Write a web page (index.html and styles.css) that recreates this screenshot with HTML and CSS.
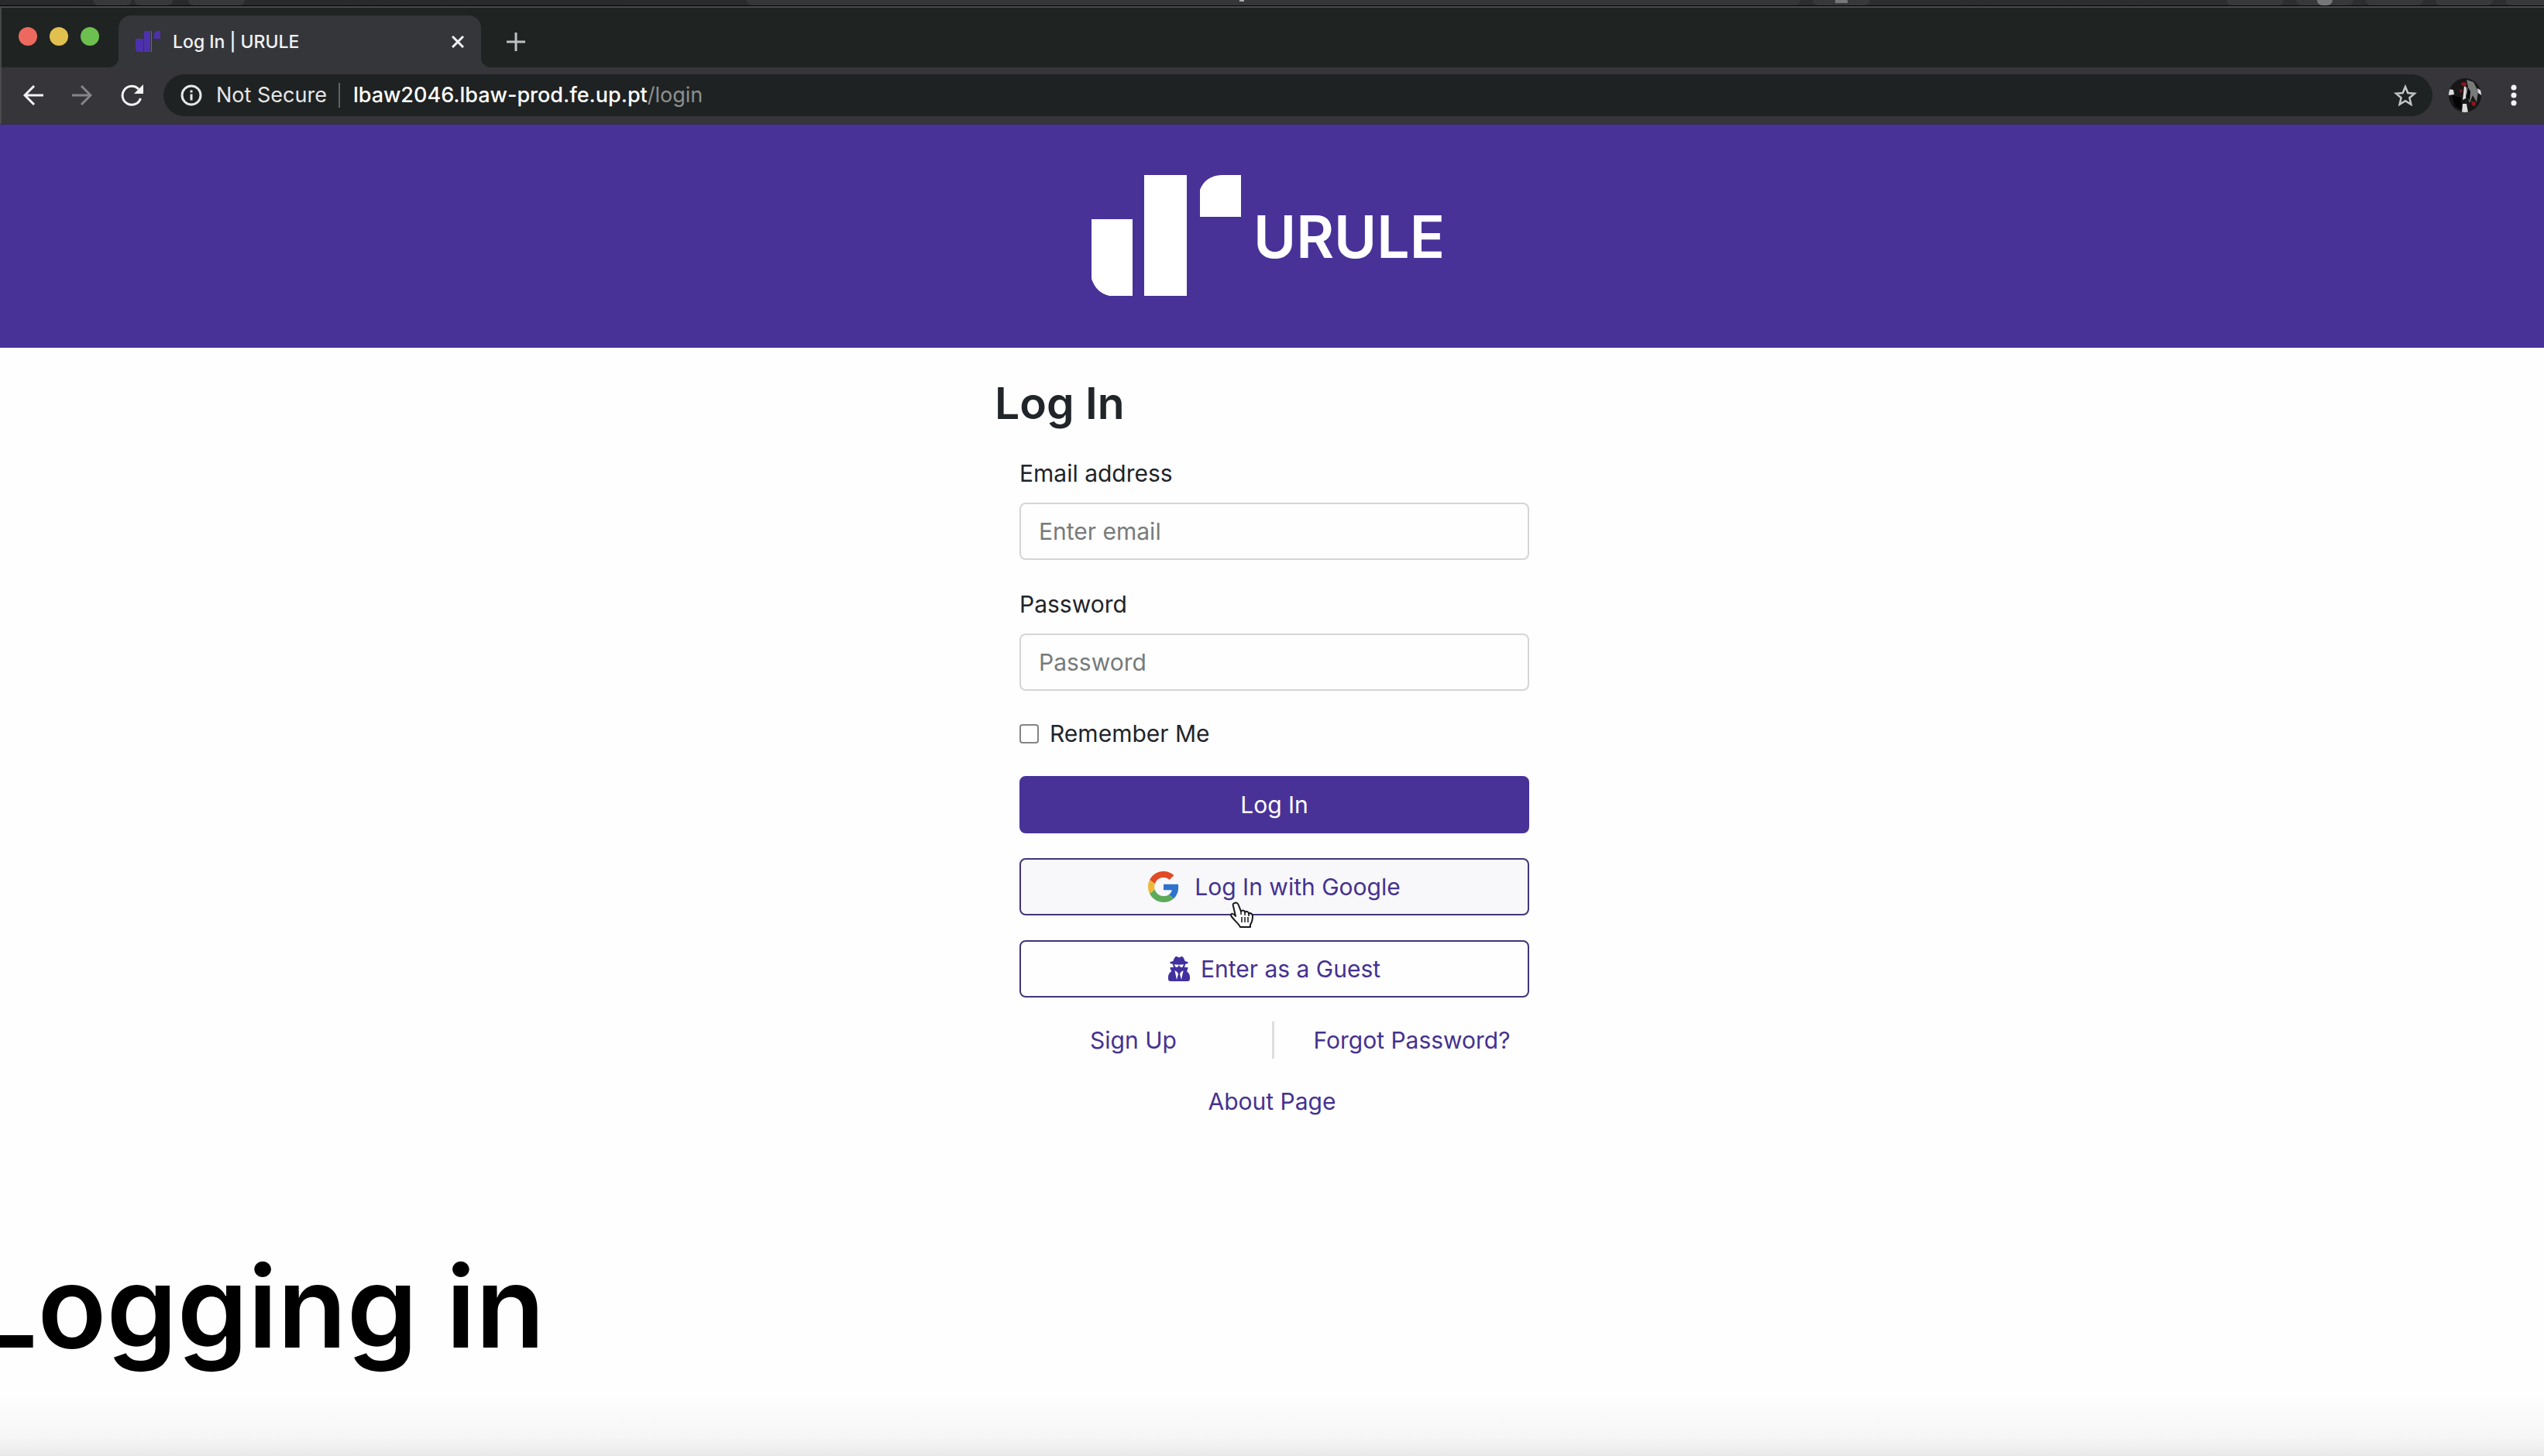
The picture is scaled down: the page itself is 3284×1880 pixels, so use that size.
FILE: index.html
```html
<!DOCTYPE html>
<html lang="en">
<head>
<meta charset="utf-8">
<meta name="viewport" content="width=device-width, initial-scale=1">
<title>Log In | URULE</title>
<link rel="stylesheet" href="styles.css">
</head>
<body>
<div class="backdrop" aria-hidden="true">
  <span class="pill pill-first"></span><span class="pill"></span><span class="pill pill-wide"></span>
  <span class="pill-address"><i class="glyph-lock"></i></span>
  <span class="pill pill-mid"><i class="glyph-square"></i></span>
  <span class="pill pill-right"></span><span class="pill pill-mid"><i class="glyph-round"></i></span><span class="pill pill-mid"></span><span class="pill pill-mid"></span><span class="pill pill-last"></span>
</div>

<div class="window">
  <div class="tabstrip">
    <div class="lights">
      <button class="light light-close" aria-label="Close window"></button>
      <button class="light light-min" aria-label="Minimise window"></button>
      <button class="light light-max" aria-label="Zoom window"></button>
    </div>
    <div class="tab">
      <svg class="favicon" viewBox="0 0 32 28" aria-hidden="true"><path d="M0 10h10v17H4q-4 0-4-4zM11 0h8v27h-8zM29 0h3v10h-8V5q0-5 5-5z" fill="#4d31ac"/><path d="M20 0h1v27h-1z" fill="#6d6678"/></svg>
      <span class="tab-title">Log In | URULE</span>
      <button class="icon-button tab-close" aria-label="Close tab">
        <svg width="16" height="16" viewBox="0 0 16 16"><path d="M1 1l14 14M15 1L1 15" stroke="#f1f2f3" stroke-width="3" fill="none"/></svg>
      </button>
    </div>
    <button class="icon-button" aria-label="New tab">
      <svg width="26" height="26" viewBox="0 0 26 26"><path d="M13 1v24M1 13h24" stroke="#bfc1c1" stroke-width="3" fill="none"/></svg>
    </button>
  </div>

  <div class="toolbar">
    <div class="nav-buttons">
      <button class="icon-button" aria-label="Back">
        <svg width="26" height="26" viewBox="0 0 26 26"><path d="M26 13H3M14 1L2 13l12 12" stroke="#f3f3f5" stroke-width="3" fill="none"/></svg>
      </button>
      <button class="icon-button" aria-label="Forward">
        <svg width="26" height="26" viewBox="0 0 26 26"><path d="M0 13h23M12 1l12 12-12 12" stroke="#858588" stroke-width="3" fill="none"/></svg>
      </button>
      <button class="icon-button" aria-label="Reload">
        <svg width="30" height="28" viewBox="0 0 30 28"><path d="M23 6.200A12 12 0 1 0 25.500 18" stroke="#f3f3f5" stroke-width="3" fill="none"/><path d="M29 0v12H17z" fill="#f3f3f5"/></svg>
      </button>
    </div>
    <div class="omnibox">
      <button class="site-info">
        <svg width="28" height="28" viewBox="0 0 28 28" aria-hidden="true"><circle cx="14" cy="14" r="12" fill="none" stroke="#e6e7e8" stroke-width="3"/><path d="M12.500 12.500h3v8h-3zM12.500 7.500h3v3h-3z" fill="#e6e7e8"/></svg>
        <span>Not Secure</span>
      </button>
      <div class="address" role="textbox" aria-label="Address" contenteditable="true" spellcheck="false">lbaw2046.lbaw-prod.fe.up.pt<span class="address-path">/login</span></div>
      <button class="icon-button" aria-label="Bookmark this page">
        <svg width="30" height="28" viewBox="0 0 30 28"><path d="M15 3l3.300 8 8.700.7-6.600 5.600 2 8.500L15 21.300l-7.400 4.500 2-8.500L3 11.700l8.700-.7z" fill="none" stroke="#c3c5c6" stroke-width="2.500"/></svg>
      </button>
    </div>
    <button class="icon-button" aria-label="Profile">
      <svg width="42" height="44" viewBox="0 0 42 44"><defs><clipPath id="face"><ellipse cx="21" cy="22" rx="21" ry="22"/></clipPath></defs><g clip-path="url(#face)"><path fill="#171718" d="M0 0h42v44H0z"/><path fill="#777b7a" d="M23 2l9 3 6 12-2 14-5-9-4 10-5-14 3-7z"/><path fill="#d9dcdb" d="M0 14l6 1 1 6-7 1zM20 10l3 2-1 14-4 2zM18 33h5l2 11h-8zM37 13l5 3v6l-4-3z"/><path fill="#050506" d="M4 22l12 3 1 16-9-5zM25 12l3 5-1 12-4-6z"/><path fill="#8f1620" d="M17 5l6 1-1 5-6-2zM14 14l4 2-3 3zM29 29l6 2-1 5-4-1z"/></g></svg>
    </button>
    <button class="icon-button" aria-label="Browser menu">
      <svg width="8" height="28" viewBox="0 0 8 28"><g fill="#f3f3f5"><circle cx="4" cy="4" r="3.500"/><circle cx="4" cy="14" r="3.500"/><circle cx="4" cy="24" r="3.500"/></g></svg>
    </button>
  </div>

  <header class="banner">
    <a class="brand" href="#">
      <svg class="brand-mark" width="193" height="156" viewBox="0 0 193 156" aria-hidden="true"><path fill="#fff" d="M0 57h53v99H23Q6 152 0 134zM68 0h55v156H68zM168 0h25v54h-53V19q7-18 28-19z"/></svg>
      <span class="brand-name">URULE</span>
    </a>
  </header>

  <main class="page">
    <h1>Log In</h1>
    <form class="login">
      <label for="email">Email address</label>
      <input class="field" id="email" type="email" placeholder="Enter email">
      <label for="password">Password</label>
      <input class="field" id="password" type="password" placeholder="Password">
      <div class="remember">
        <input type="checkbox" id="remember">
        <label for="remember">Remember Me</label>
      </div>
      <button class="button button-primary" type="submit">Log In</button>
      <button class="button button-google" type="button">
        <svg width="40" height="40" viewBox="0 0 48 48" aria-hidden="true"><path fill="#e04a24" d="M24 9.500c3.540 0 6.710 1.220 9.210 3.600l6.850-6.850C35.900 2.380 30.470 0 24 0 14.620 0 6.510 5.380 2.560 13.220l7.980 6.190C12.430 13.720 17.740 9.500 24 9.500z"/><path fill="#2f73cc" d="M46.980 24.550c0-1.570-.15-3.090-.38-4.550H24v9.020h12.940c-.58 2.960-2.260 5.480-4.780 7.180l7.730 6c4.510-4.180 7.090-10.360 7.090-17.650z"/><path fill="#edb83b" d="M10.530 28.590c-.48-1.450-.76-2.990-.76-4.590s.27-3.140.76-4.590l-7.980-6.190C.92 16.460 0 20.120 0 24s.92 7.540 2.560 10.780l7.970-6.190z"/><path fill="#5eaa5b" d="M24 48c6.480 0 11.930-2.130 15.890-5.810l-7.730-6c-2.150 1.450-4.920 2.300-8.160 2.300-6.260 0-11.570-4.220-13.470-9.910l-7.980 6.190C6.510 42.620 14.620 48 24 48z"/></svg>
        <span class="pointed">Log In with Google
          <svg class="pointer" width="34" height="36" viewBox="0 0 34 36" aria-hidden="true"><path d="M8 2c2-1 4 0 5 3l3 8c1-2 5-2 5 1 2-2 5-1 5 2 2-2 5 0 5 3 0 6-1 8-3 11v3H15c-2-5-9-9-12-15 0-3 3-3 6 1L6 6c-1-2 0-4 2-4z" fill="#fff" stroke="#17171c" stroke-width="2" stroke-linejoin="round"/><path d="M17 20v7M21 20v7M25 20v7M16 13v4M21 14v4M26 16v3" stroke="#17171c" stroke-width="1.500"/></svg>
        </span>
      </button>
      <button class="button button-guest" type="button">
        <svg width="28" height="32" viewBox="0 0 448 512" aria-hidden="true"><path fill="#4130a0" d="M383.900 308.300l23.900-62.600c4-10.500-3.700-21.700-15-21.700h-58.500c11-18.900 17.800-40.600 17.800-64v-.3c39.200-7.800 64-19.100 64-31.700 0-13.300-27.300-25.100-70.100-33-9.200-32.800-27-65.800-40.600-82.800-9.500-11.900-25.900-15.600-39.500-8.800l-27.600 13.800c-9 4.500-19.600 4.500-28.600 0L182.100 3.400c-13.600-6.800-30-3.100-39.500 8.800-13.500 17-31.400 50-40.600 82.800-42.700 7.900-70 19.700-70 33 0 12.600 24.800 23.900 64 31.700v.3c0 23.400 6.800 45.100 17.800 64H56.300c-11.500 0-19.200 11.700-14.700 22.300l25.800 60.200C27.300 329.800 0 372.700 0 422.400v44.800C0 491.900 20.100 512 44.800 512h358.400c24.700 0 44.800-20.100 44.800-44.800v-44.800c0-48.400-25.800-90.400-64.100-114.100zM176 480l-41.600-192 49.600 32 24 40-32 120zm96 0l-32-120 24-40 49.600-32L272 480zm41.700-298.500c-3.900 11.900-7 24.600-16.500 33.400-10.100 9.300-48 22.400-64-25-2.800-8.400-15.400-8.400-18.300 0-17 50.200-56 32.400-64 25-9.500-8.800-12.700-21.500-16.500-33.400-.8-2.500-6.300-5.700-6.300-5.800v-10.800c28.300 3.600 61 5.800 96 5.800s67.700-2.100 96-5.800v10.800c-.1.100-5.600 3.200-6.400 5.800z"/></svg>
        <span>Enter as a Guest</span>
      </button>
    </form>
    <nav class="links">
      <div class="link-pair">
        <a href="#">Sign Up</a>
        <a href="#">Forgot Password?</a>
      </div>
      <a href="#">About Page</a>
    </nav>
  </main>
</div>
<p class="caption">Logging in</p>
</body>
</html>
```

FILE: styles.css
```css
*, *::before, *::after { box-sizing: border-box; }

body {
  margin: 0;
  min-height: 100vh;
  display: flex;
  flex-direction: column;
  position: relative;
  overflow-x: hidden;
  background: #fefefe;
  color: #212429;
  font: 400 30px/48px Inter, "Liberation Sans", sans-serif;
}

button, input { font: inherit; color: inherit; }
button { padding: 0; border: 0; background: none; cursor: pointer; }
svg { display: block; flex: none; }
a { color: #453190; text-decoration: none; }

/* Sliver of the window behind */
.backdrop {
  display: flex;
  height: 8px;
  flex: none;
  background: linear-gradient(90deg, #29292b, #2e2e30);
  border-bottom: 1px solid #000;
}
.pill { width: 50px; margin-right: 3px; background: #38383a; border-radius: 0 0 8px 8px; }
.pill-first { margin-left: 120px; }
.pill-wide { width: 73px; margin-left: 17px; }
.pill-address { flex: 1; margin: 0 16px 0 645px; background: #363638; border-radius: 0 0 8px 8px; }
.pill-mid { width: 74px; margin-right: 16px; }
.pill-right { width: 74px; margin: 0 16px 0 444px; }
.pill-last { width: 50px; margin: 0; border-bottom-right-radius: 0; }
.glyph-lock, .glyph-square, .glyph-round { display: block; margin: 0 auto; background: #777779; }
.glyph-lock { width: 6px; height: 2px; margin-left: 636px; background: #aaa; }
.glyph-square { width: 16px; height: 4px; }
.glyph-round { width: 20px; height: 7px; border-radius: 0 0 10px 10px; }

.window {
  flex: 1;
  display: flex;
  flex-direction: column;
  border-top: 2px solid #4b4c4c;
  background: linear-gradient(0deg, #e9e9e9, #f6f6f6 24px, rgba(254, 254, 254, 0) 80px);
}

/* Tab strip */
.tabstrip {
  display: flex;
  align-items: center;
  height: 77px;
  padding-top: 10px;
  background: #1f2322;
  border-left: 2px solid #434746;
}
.lights { display: flex; flex: none; gap: 16px; width: 151px; padding-left: 22px; margin-bottom: 14px; }
.light { width: 24px; height: 24px; border-radius: 50%; }
.light-close { background: #ed695e; }
.light-min { background: #e2c04f; }
.light-max { background: #6dc04f; }
.tab {
  position: relative;
  display: flex;
  align-items: center;
  align-self: stretch;
  width: 468px;
  margin-right: 32px;
  padding: 0 22px;
  border-radius: 16px 16px 0 0;
  background: #35363a;
  color: #f1f2f3;
  font-size: 23px;
  font-weight: 500;
  line-height: 32px;
}
.tab::before, .tab::after {
  content: "";
  position: absolute;
  bottom: 0;
  width: 12px;
  height: 12px;
}
.tab::before { right: 100%; background: radial-gradient(circle at 0 0, transparent 12px, #35363a 12px); }
.tab::after { left: 100%; background: radial-gradient(circle at 100% 0, transparent 12px, #35363a 12px); }
.favicon { width: 32px; height: 28px; margin-right: 16px; }
.tab-title { flex: 1; }

/* Toolbar */
.toolbar {
  display: flex;
  align-items: center;
  gap: 21px;
  height: 74px;
  padding: 0 35px 2px 28px;
  background: #36363a;
  border-bottom: 1px solid #302c46;
  border-left: 2px solid #4a4a4d;
}
.nav-buttons { display: flex; align-items: center; gap: 37px; width: 160px; }
.omnibox {
  flex: 1;
  display: flex;
  align-items: center;
  height: 54px;
  padding: 0 20px 0 22px;
  border-radius: 27px;
  background: #1f2222;
  color: #e6e7e8;
  font-size: 27px;
  line-height: 32px;
}
.toolbar > .icon-button + .icon-button { margin-left: 17px; }
.site-info { display: flex; align-items: center; gap: 18px; padding-right: 15px; border-right: 2px solid #606364; }
.address { flex: 1; padding-left: 17px; color: #fff; font-weight: 500; outline: 0; }
.address-path { color: #8d9090; font-weight: 400; }

/* Site banner */
.banner {
  display: flex;
  justify-content: center;
  padding: 65px 0 67px;
  background: #483298;
}
.brand {
  display: flex;
  align-items: center;
  gap: 16px;
  margin-right: 10px;
  color: #fff;
  font-size: 75px;
  font-weight: 600;
  line-height: 96px;
}
.brand-name { padding-top: 4px; }

/* Log-in page */
.page { width: 716px; max-width: 100%; margin: 0 auto; padding: 36px 0 96px; }
h1 { margin: 0; font-size: 57px; font-weight: 600; line-height: 72px; }
.login { display: flex; flex-direction: column; padding: 30px 26px 0 32px; }
.login > label { height: 62px; }
.field {
  height: 74px;
  margin-bottom: 33px;
  padding: 0 23px;
  border: 2px solid #d4d5d6;
  border-radius: 8px;
  background: #fefefe;
}
.field::placeholder { color: #777b7b; opacity: 1; }
.remember { display: flex; align-items: center; gap: 14px; height: 48px; margin: -2px 0 31px; }
.remember input {
  appearance: none;
  width: 25px;
  height: 25px;
  margin: 0;
  border: 2px solid #858585;
  border-radius: 4px;
  background: #fff;
}
.button {
  display: flex;
  justify-content: center;
  align-items: center;
  height: 74px;
  margin-bottom: 32px;
  border: 2px solid #433579;
  border-radius: 8px;
  color: #453190;
}
.button-primary { border-color: #483298; background: #483298; color: #fff; }
.button-google { gap: 20px; background: #f8f8fa; }
.button-guest { gap: 14px; margin-bottom: 31px; }
.pointed { position: relative; }
.pointer { position: absolute; left: 44px; top: 43px; }
.links { text-align: center; }
.link-pair {
  display: grid;
  grid-template-columns: 1fr 1fr;
  margin-bottom: 31px;
}
.link-pair a + a { border-left: 3px solid #dddee0; }

.caption {
  position: absolute;
  left: -34px;
  bottom: 113px;
  margin: 0;
  color: #000;
  font-size: 146px;
  font-weight: 600;
  line-height: 160px;
  white-space: nowrap;
}
```
